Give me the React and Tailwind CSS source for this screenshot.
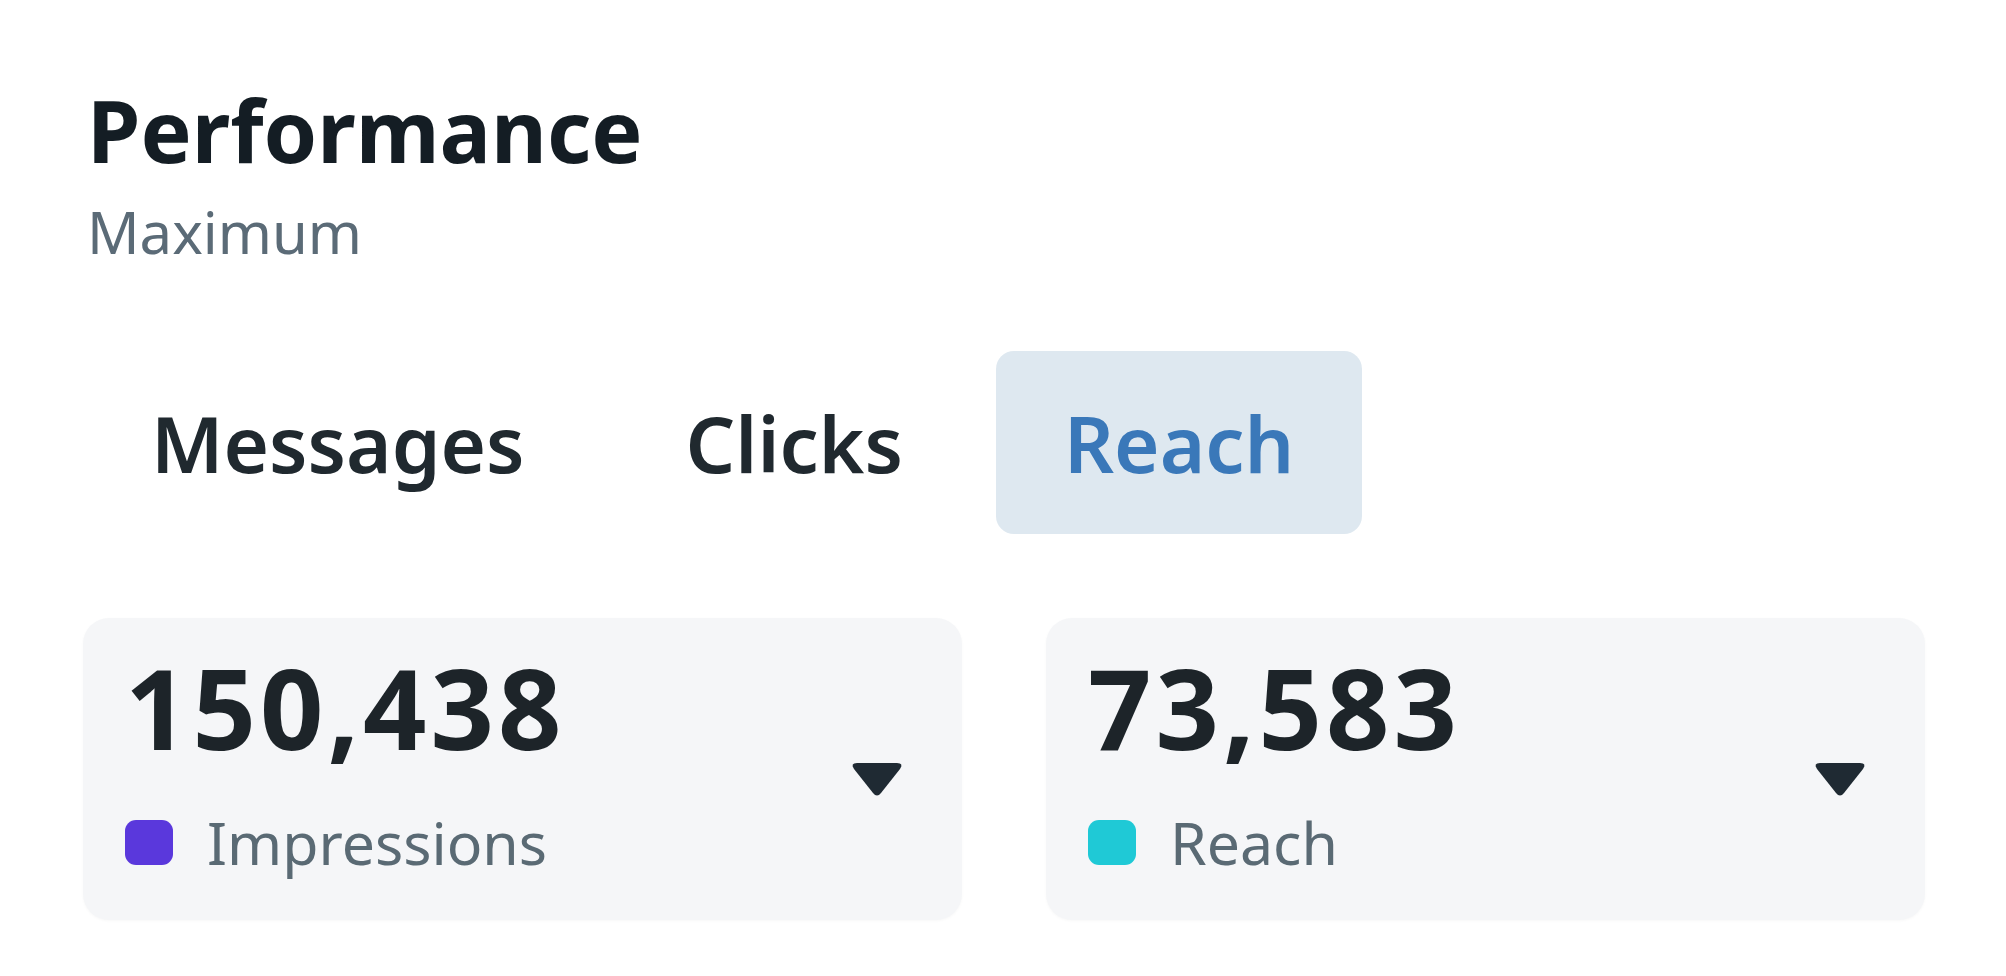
const tabs = ['Messages', 'Clicks', 'Reach'];

const stats = [
  { value: '150,438', label: 'Impressions', swatch: 'bg-[#5a38dc]' },
  { value: '73,583', label: 'Reach', swatch: 'bg-[#1fc9d6]' },
];

const Caret = () => (
  <svg width="54" height="37" viewBox="0 0 54 37">
    <path
      d="M7 2 H47 Q54 2 50 8 L31 32 Q27 37 23 32 L4 8 Q0 2 7 2 Z"
      fill="#1f2a33"
    />
  </svg>
);

const App = () => {
  const active = 'Reach';

  return (
    <div
      className="min-h-screen bg-white pt-[87px] pl-[83px]"
      style={{ fontFamily: '"Noto Sans", "Open Sans", sans-serif' }}
    >
      <div className="pl-[4px]">
        <h1 className="text-[86px] leading-none font-bold text-[#141d24]">Performance</h1>
        <p className="mt-[30px] text-[58px] leading-none text-[#5b6b77]">Maximum</p>
      </div>

      <div className="mt-[90px] flex gap-[25px]">
        {tabs.map((tab) => (
          <button
            key={tab}
            className={
              tab === active
                ? 'h-[183px] px-[68px] rounded-[18px] bg-[#dee8f0] text-[78px] leading-none font-semibold text-[#3a78b9]'
                : 'h-[183px] px-[68px] rounded-[18px] text-[78px] leading-none font-semibold text-[#20292f]'
            }
          >
            {tab}
          </button>
        ))}
      </div>

      <div className="mt-[84px] flex gap-[84px]">
        {stats.map((s) => (
          <div
            key={s.value}
            className="w-[879px] h-[302px] rounded-[26px] bg-[#f5f6f8] shadow-[0_1px_3px_rgba(0,0,0,0.03)] flex justify-between pl-[42px] pr-[58px] pt-[34px]"
          >
            <div>
              <div className="text-[111px] leading-none font-bold text-[#1d2429] tracking-[4px]">
                {s.value}
              </div>
              <div className="mt-[50px] flex items-center gap-[34px]">
                <span className={'w-[48px] h-[45px] rounded-[11px] ' + s.swatch}></span>
                <span className="text-[59px] leading-none text-[#5a6a74]">{s.label}</span>
              </div>
            </div>
            <div className="mt-[109px]">
              <Caret />
            </div>
          </div>
        ))}
      </div>
    </div>
  );
};

export default App;
